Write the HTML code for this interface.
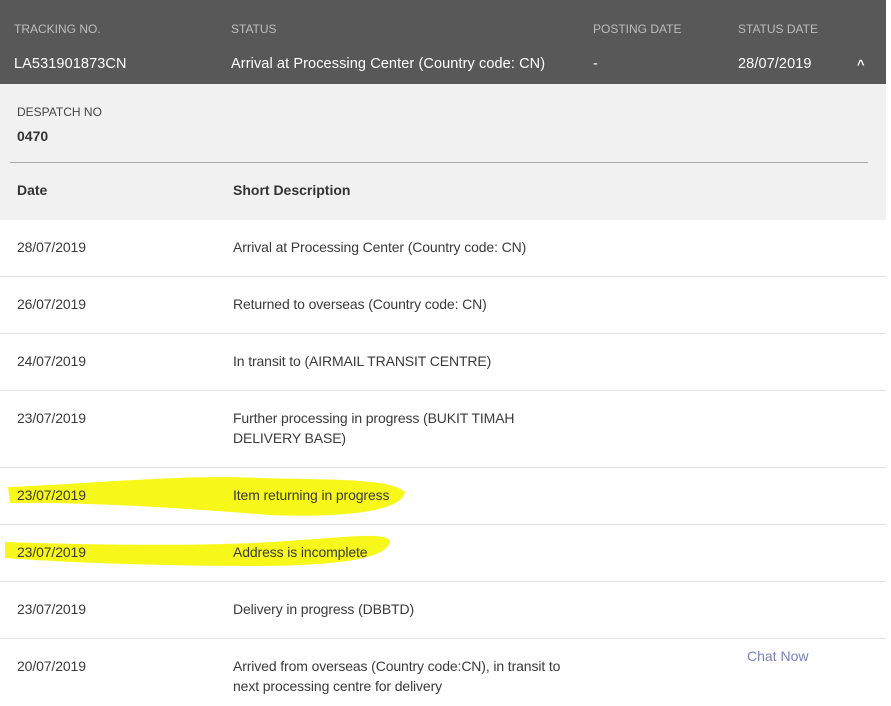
<!DOCTYPE html>
<html><head><style>
body{margin:0;width:891px;height:706px;background:#fff;font-family:"Liberation Sans",Arial,sans-serif;position:relative;overflow:hidden;color:#333}
.a{position:absolute;white-space:nowrap}
.hd{position:absolute;left:0;top:0;width:886px;height:84px;background:#585858}
.lb{font-size:12px;color:#bdbdbd;top:22px}
.v{font-size:14.5px;color:#fff;top:56px;letter-spacing:0.1px}
.gr{position:absolute;left:0;top:84px;width:886px;height:136px;background:#f1f1f1}
.ln{position:absolute;left:0;width:886px;height:1px;background:#e2e2e2}
.t{font-size:14px;color:#3a3a3a;letter-spacing:-0.12px}
</style></head><body>
<div class="hd"></div>
<div class="a lb" style="left:14px">TRACKING NO.</div>
<div class="a lb" style="left:231px">STATUS</div>
<div class="a lb" style="left:593px">POSTING DATE</div>
<div class="a lb" style="left:738px">STATUS DATE</div>
<div class="a v" style="left:14px">LA531901873CN</div>
<div class="a v" style="left:231px">Arrival at Processing Center (Country code: CN)</div>
<div class="a v" style="left:593px">-</div>
<div class="a v" style="left:738px">28/07/2019</div>
<div class="a v" style="left:857px;font-size:13px;top:57px;font-weight:bold">&#94;</div>
<div class="gr"></div>
<div class="a" style="left:17px;top:105px;font-size:12px;color:#444">DESPATCH NO</div>
<div class="a" style="left:17px;top:128px;font-size:14px;font-weight:bold;color:#333">0470</div>
<div class="a" style="left:10px;top:162px;width:858px;height:1px;background:#a8a8a8"></div>
<div class="a" style="left:17px;top:182px;font-size:14px;font-weight:bold;color:#333">Date</div>
<div class="a" style="left:233px;top:182px;font-size:14px;font-weight:bold;color:#333">Short Description</div>
<svg class="a" style="left:0;top:0" width="891" height="706">
<path d="M8 487 C90 484 180 474 260 478 C330 480 390 478 405 492 C402 512 340 518 270 515 C180 508 90 502 10 503 Z" fill="#f7f71a"/>
<path d="M5 542 C120 546 230 546 300 540 C350 537 385 532 390 541 C388 560 330 566 250 566 C150 566 60 562 5 558 Z" fill="#f7f71a"/>
</svg>
<div class="ln" style="top:276px"></div><div class="ln" style="top:333px"></div><div class="ln" style="top:390px"></div><div class="ln" style="top:467px"></div><div class="ln" style="top:524px"></div><div class="ln" style="top:581px"></div><div class="ln" style="top:638px"></div>
<div class="a t" style="left:17px;top:239px">28/07/2019</div><div class="a t" style="left:233px;top:239px">Arrival at Processing Center (Country code: CN)</div>
<div class="a t" style="left:17px;top:296px">26/07/2019</div><div class="a t" style="left:233px;top:296px">Returned to overseas (Country code: CN)</div>
<div class="a t" style="left:17px;top:353px">24/07/2019</div><div class="a t" style="left:233px;top:353px">In transit to (AIRMAIL TRANSIT CENTRE)</div>
<div class="a t" style="left:17px;top:410px">23/07/2019</div><div class="a t" style="left:233px;top:408px;line-height:20px">Further processing in progress (BUKIT TIMAH<br>DELIVERY BASE)</div>
<div class="a t" style="left:17px;top:487px">23/07/2019</div><div class="a t" style="left:233px;top:487px">Item returning in progress</div>
<div class="a t" style="left:17px;top:544px">23/07/2019</div><div class="a t" style="left:233px;top:544px">Address is incomplete</div>
<div class="a t" style="left:17px;top:601px">23/07/2019</div><div class="a t" style="left:233px;top:601px">Delivery in progress (DBBTD)</div>
<div class="a t" style="left:17px;top:658px">20/07/2019</div><div class="a t" style="left:233px;top:656px;line-height:20px">Arrived from overseas (Country code:CN), in transit to<br>next processing centre for delivery</div>
<div class="a" style="left:747px;top:648px;font-size:14px;color:#7a80b8">Chat Now</div>
</body></html>
